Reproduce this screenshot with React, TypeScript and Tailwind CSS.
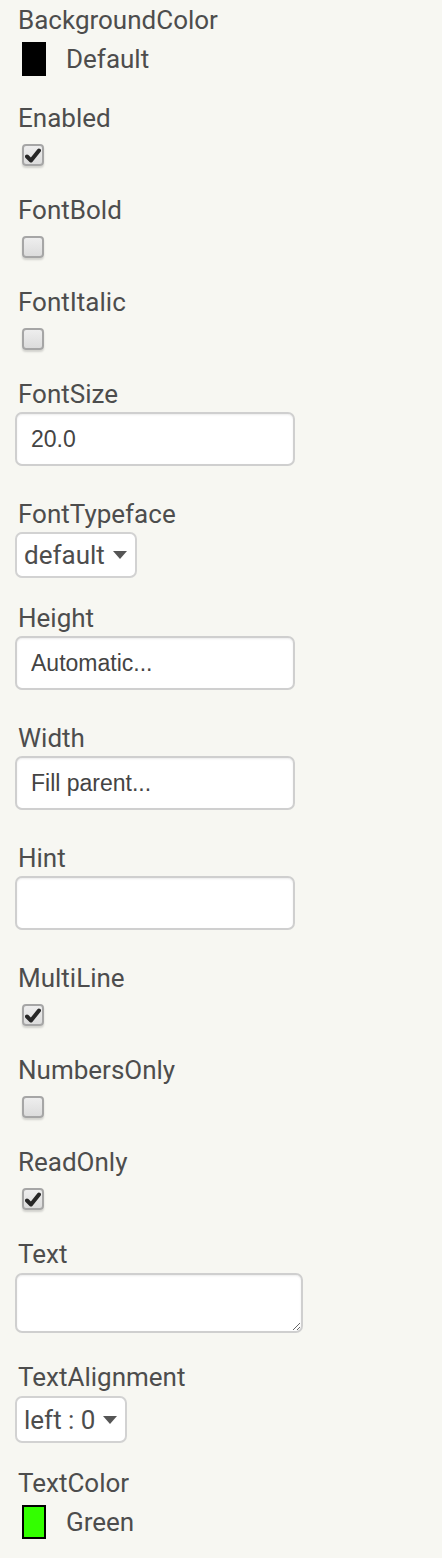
import React from "react";

const labelCls =
  "block h-[28px] whitespace-nowrap pl-[18px] text-[26px] leading-[28px] text-[#4d4d4d]";
const inputFont = { fontFamily: '"Liberation Sans", Arial, sans-serif' };

function Label({ text }: { text: string }) {
  return <div className={labelCls}>{text}</div>;
}

function Checkbox({ checked }: { checked: boolean }) {
  return (
    <div className="ml-[22px] mt-[12px] mb-[28px] h-[24px] w-[24px]">
      <div className="flex h-[22px] w-[22px] items-center justify-center rounded-[4px] border-2 border-[#a6a6a6] bg-gradient-to-b from-[#eeeeee] to-[#dcdcdc] shadow-[0_2px_2px_rgba(0,0,0,0.15)]">
        {checked && (
          <svg width="16" height="15" viewBox="0 0 16 15">
            <path
              d="M2 8.5 L6 12.5 L14 2.5"
              fill="none"
              stroke="#262626"
              strokeWidth="4"
              strokeLinecap="round"
              strokeLinejoin="round"
            />
          </svg>
        )}
      </div>
    </div>
  );
}

function CheckProp({ name, checked }: { name: string; checked: boolean }) {
  return (
    <div>
      <Label text={name} />
      <Checkbox checked={checked} />
    </div>
  );
}

function ColorProp({
  name,
  value,
  swatch,
  mb,
}: {
  name: string;
  value: string;
  swatch: string;
  mb: string;
}) {
  return (
    <div className={mb}>
      <Label text={name} />
      <div className="mt-[8px] flex h-[34px] items-center">
        <span className={`ml-[22px] h-[34px] w-[24px] ${swatch}`} />
        <span className="ml-[20px] text-[26px] leading-[28px] text-[#4d4d4d]">
          {value}
        </span>
      </div>
    </div>
  );
}

function TextProp({ name, value }: { name: string; value: string }) {
  return (
    <div className="mb-[34px]">
      <Label text={name} />
      <input
        readOnly
        value={value}
        style={inputFont}
        className="ml-[15px] mt-[4px] block h-[54px] w-[280px] rounded-[7px] border-2 border-[#cfcfcf] bg-white px-[14px] text-[23px] text-[#444] shadow-[inset_0_1px_2px_rgba(0,0,0,0.08)] outline-none"
      />
    </div>
  );
}

function Dropdown({
  name,
  value,
  width,
  mt,
  h,
}: {
  name: string;
  value: string;
  width: string;
  mt: string;
  h: string;
}) {
  return (
    <div className="mb-[26px]">
      <Label text={name} />
      <div
        className={`ml-[15px] ${mt} ${h} ${width} flex items-center rounded-[7px] border-2 border-[#d2d2d2] bg-white pl-[7px] text-[26px] text-[#4d4d4d]`}
      >
        <span className="leading-[28px]">{value}</span>
        <svg className="ml-[8px]" width="14" height="8" viewBox="0 0 14 8">
          <path d="M0 0 L14 0 L7 8 Z" fill="#555" />
        </svg>
      </div>
    </div>
  );
}

export default function App() {
  return (
    <div
      className="min-h-screen w-full bg-[#f7f7f2] pt-[6px]"
      style={{ fontFamily: "Roboto, 'Liberation Sans', sans-serif" }}
    >
      <ColorProp
        name="BackgroundColor"
        value="Default"
        swatch="bg-black"
        mb="mb-[28px]"
      />
      <CheckProp name="Enabled" checked />
      <CheckProp name="FontBold" checked={false} />
      <CheckProp name="FontItalic" checked={false} />
      <TextProp name="FontSize" value="20.0" />
      <Dropdown
        name="FontTypeface"
        value="default"
        width="w-[122px]"
        mt="mt-[4px]"
        h="h-[46px]"
      />
      <TextProp name="Height" value="Automatic..." />
      <TextProp name="Width" value="Fill parent..." />
      <TextProp name="Hint" value="" />
      <CheckProp name="MultiLine" checked />
      <CheckProp name="NumbersOnly" checked={false} />
      <CheckProp name="ReadOnly" checked />
      <div className="mb-[30px]">
        <Label text="Text" />
        <textarea
          readOnly
          style={inputFont}
          className="ml-[15px] mt-[5px] block h-[60px] w-[288px] rounded-[7px] border-2 border-[#cfcfcf] bg-white px-[14px] text-[23px] shadow-[inset_0_1px_2px_rgba(0,0,0,0.08)] outline-none"
        />
      </div>
      <Dropdown
        name="TextAlignment"
        value="left : 0"
        width="w-[112px]"
        mt="mt-[5px]"
        h="h-[47px]"
      />
      <ColorProp
        name="TextColor"
        value="Green"
        swatch="bg-[#33ff00] border-2 border-black"
        mb="mb-[20px]"
      />
    </div>
  );
}
